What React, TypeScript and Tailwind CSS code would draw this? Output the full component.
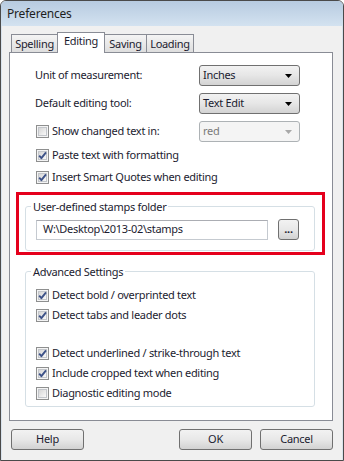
import type { ReactNode } from "react";

const font = "font-['Segoe_UI','Noto_Sans',sans-serif]";
const textColor = "text-[#1c1c30]";

function CheckBox({ checked }: { checked?: boolean }) {
  return (
    <span className="relative inline-block h-[13px] w-[13px] shrink-0 border border-[#8e8f8f] bg-[#f4f4f4] p-[1px]">
      <span className="block h-full w-full border border-[#c3c6cb] bg-gradient-to-br from-[#d6d6d6] to-[#f9f9f9]" />
      {checked ? (
        <svg className="absolute inset-0" width="11" height="11" viewBox="0 0 11 11">
          <path
            d="M2.2 5.6 L4.4 8.2 L9 2.4"
            fill="none"
            stroke="#3d5288"
            strokeWidth="1.9"
            strokeLinejoin="round"
          />
        </svg>
      ) : null}
    </span>
  );
}

function CheckRow({
  checked,
  label,
  className = "",
}: {
  checked?: boolean;
  label: string;
  className?: string;
}) {
  return (
    <div className={`flex items-center gap-[3px] ${className}`}>
      <CheckBox checked={checked} />
      <span className="whitespace-nowrap">{label}</span>
    </div>
  );
}

function Arrow({ color }: { color: string }) {
  return (
    <svg width="7" height="4" viewBox="0 0 7 4" className="shrink-0">
      <polygon points="0,0 7,0 3.5,4" fill={color} />
    </svg>
  );
}

function Dropdown({ value }: { value: string }) {
  return (
    <div className="flex h-[21px] w-[101px] items-center justify-between rounded-[3px] border border-[#707070] bg-gradient-to-b from-[#f2f2f2] via-[#e6e6e6] to-[#d3d3d3] pl-[3px] pr-[7px]">
      <span>{value}</span>
      <Arrow color="#000" />
    </div>
  );
}

function DisabledDropdown({ value }: { value: string }) {
  return (
    <div className="flex h-[21px] w-[101px] items-center justify-between rounded-[3px] border border-[#adb2b5] bg-[#f4f4f4] pl-[3px] pr-[7px] text-[#7a7a7a]">
      <span>{value}</span>
      <Arrow color="#a8a8a8" />
    </div>
  );
}

function Button({ children, className = "" }: { children: ReactNode; className?: string }) {
  return (
    <button
      type="button"
      className={`flex h-[21px] w-[73px] items-center justify-center rounded-[3px] border border-[#707070] bg-gradient-to-b from-[#f2f2f2] via-[#e8e8e8] to-[#d2d2d2] ${className}`}
    >
      {children}
    </button>
  );
}

function Group({
  title,
  children,
  className = "",
}: {
  title: string;
  children: ReactNode;
  className?: string;
}) {
  return (
    <fieldset
      className={`w-[290px] rounded-[3px] border border-[#d5dfe5] px-[5px] ${className}`}
    >
      <legend className="px-[2px] leading-[15px]">{title}</legend>
      {children}
    </fieldset>
  );
}

const tabs = ["Spelling", "Editing", "Saving", "Loading"];
const tabWidths: Record<string, string> = {
  Spelling: "w-[47px]",
  Editing: "w-[48px]",
  Saving: "w-[43px]",
  Loading: "w-[48px]",
};

export default function App() {
  return (
    <div
      className={`flex h-[461px] w-[344px] flex-col overflow-hidden rounded-t-[6px] border border-[#4a4a4a] bg-[#f0f0f0] text-[11px] tracking-[-0.3px] ${font} ${textColor}`}
    >
      <div className="flex h-[25px] shrink-0 items-center bg-gradient-to-b from-[#b7cbe0] to-[#d3e2f0] pl-[6px] text-[12px] tracking-[-0.2px] text-[#1e1e1e]">
        Preferences
      </div>

      <div className="flex flex-1 flex-col border-x border-[#d8e2ec] px-[7px]">
        <div className="flex h-[26px] items-end pl-[2px]">
          {tabs.map((t) => {
            const active = t === "Editing";
            return (
              <div
                key={t}
                className={`-ml-px flex items-center justify-center border border-b-0 border-[#898c95] first:ml-0 ${
                  tabWidths[t]
                } ${
                  active
                    ? "relative z-10 -mb-px h-[21px] bg-white pb-[3px]"
                    : "h-[18px] bg-gradient-to-b from-[#f4f4f4] to-[#dedede] pt-[1px]"
                }`}
              >
                {t}
              </div>
            );
          })}
        </div>

        <div className="flex h-[369px] w-[324px] flex-col border border-[#898c95] bg-white">
          <div className="flex items-center pl-[25px] pr-[32px] pt-[12px]">
            <span>Unit of measurement:</span>
            <div className="ml-auto">
              <Dropdown value="Inches" />
            </div>
          </div>
          <div className="mt-[7px] flex items-center pl-[25px] pr-[32px]">
            <span>Default editing tool:</span>
            <div className="ml-auto">
              <Dropdown value="Text Edit" />
            </div>
          </div>
          <div className="mt-[7px] flex items-center pl-[26px] pr-[32px]">
            <CheckRow label="Show changed text in:" />
            <div className="ml-auto">
              <DisabledDropdown value="red" />
            </div>
          </div>
          <CheckRow checked label="Paste text with formatting" className="mt-[4px] h-[18px] pl-[26px]" />
          <CheckRow
            checked
            label="Insert Smart Quotes when editing"
            className="mt-[4px] h-[18px] pl-[26px]"
          />

          <div className="ml-[6px] mt-[6px] w-[309px] border-[3px] border-[#e5001c] pb-[1px] pl-[6px] pt-[4px]">
            <Group title="User-defined stamps folder" className="pb-[10px]">
              <div className="mt-[5px] flex items-center pl-[5px]">
                <div className="flex h-[20px] w-[232px] items-center border border-[#c5cad0] border-t-[#abadb3] bg-white pl-[6px]">
                  W:\Desktop\2013-02\stamps
                </div>
                <Button className="ml-[10px] !h-[21px] !w-[21px] pb-[2px] font-bold leading-none">
                  ...
                </Button>
              </div>
            </Group>
          </div>

          <Group title="Advanced Settings" className="ml-[15px] mt-[9px] pb-[3px]">
            <div className="flex flex-col pl-[5px] pt-[6px]">
              <CheckRow checked label="Detect bold / overprinted text" className="h-[20px]" />
              <CheckRow checked label="Detect tabs and leader dots" className="h-[20px]" />
              <div className="h-[19px]" />
              <CheckRow
                checked
                label="Detect underlined / strike-through text"
                className="h-[19px]"
              />
              <CheckRow
                checked
                label="Include cropped text when editing"
                className="h-[20px]"
              />
              <CheckRow label="Diagnostic editing mode" className="h-[20px]" />
            </div>
          </Group>
        </div>

        <div className="mt-[8px] flex pl-[2px]">
          <Button>Help</Button>
          <Button className="ml-auto">OK</Button>
          <Button className="ml-[8px] mr-[2px]">Cancel</Button>
        </div>
      </div>
    </div>
  );
}
